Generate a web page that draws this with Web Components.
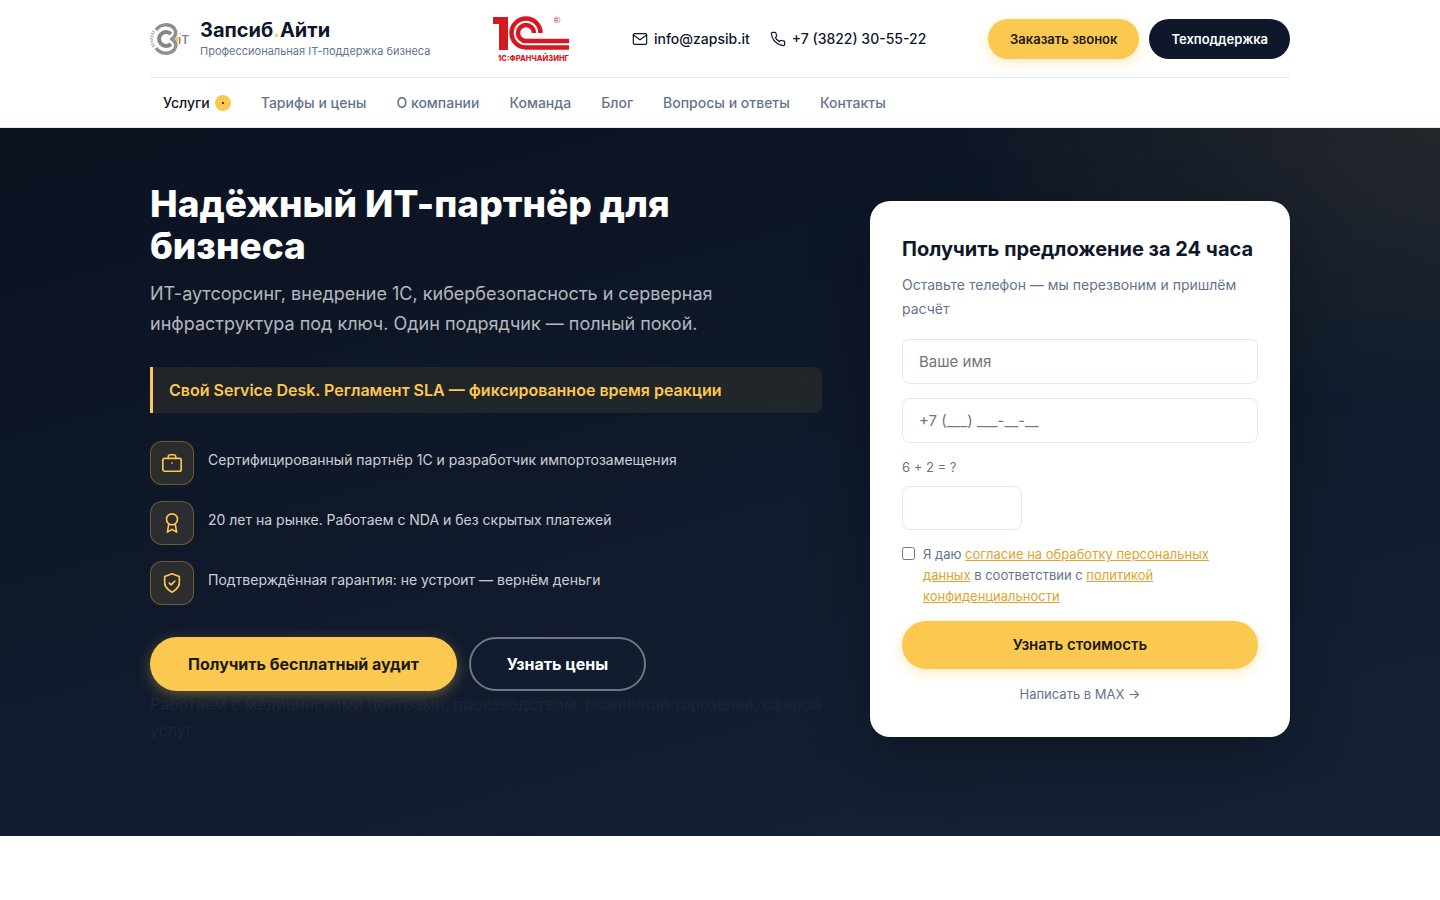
<!DOCTYPE html>
<html lang="ru">
<head>
<meta charset="utf-8">
<meta name="viewport" content="width=device-width, initial-scale=1">
<title>Запсиб.Айти</title>
<style>
  :root {
    --gold: #fbc850;
    --gold-dark: #e0a32e;
    --ink: #0f172a;
    --muted: #64748b;
    --line: #e2e8f0;
  }
  body {
    margin: 0;
    background: #fff;
    color: var(--ink);
    font: 16px/26px Inter, "Liberation Sans", sans-serif;
  }
</style>
</head>
<body>
<site-header></site-header>
<hero-section>
  <span slot="title">Надёжный ИТ-партнёр для бизнеса</span>
  <span slot="lead">ИТ-аутсорсинг, внедрение 1С, кибербезопасность и серверная инфраструктура под ключ. Один подрядчик — полный покой.</span>
  <span slot="note">Свой Service Desk. Регламент SLA — фиксированное время реакции</span>
  <feature-item slot="features" icon="case">Сертифицированный партнёр 1С и разработчик импортозамещения</feature-item>
  <feature-item slot="features" icon="award">20 лет на рынке. Работаем с NDA и без скрытых платежей</feature-item>
  <feature-item slot="features" icon="shield">Подтверждённая гарантия: не устроит — вернём деньги</feature-item>
  <pill-button slot="actions" size="large">Получить бесплатный аудит</pill-button>
  <pill-button slot="actions" size="large" kind="outline">Узнать цены</pill-button>
  <span slot="clients">Работаем с медицинскими центрами, производством, розничной торговлей, сферой услуг</span>
  <offer-form slot="form"></offer-form>
</hero-section>

<script>
const icons = {
  mail: '<rect x="2" y="4" width="20" height="16" rx="2"/><path d="M2 6l10 7 10-7"/>',
  phone: '<path d="M22 16.92v3a2 2 0 0 1-2.18 2 19.79 19.79 0 0 1-8.63-3.07 19.5 19.5 0 0 1-6-6 19.79 19.79 0 0 1-3.07-8.67A2 2 0 0 1 4.11 2h3a2 2 0 0 1 2 1.72c.127.96.361 1.903.7 2.81a2 2 0 0 1-.45 2.11L8.09 9.91a16 16 0 0 0 6 6l1.27-1.27a2 2 0 0 1 2.11-.45c.907.339 1.85.573 2.81.7A2 2 0 0 1 22 16.92z"/>',
  case: '<rect x="2" y="7" width="20" height="14" rx="2"/><path d="M16 7V5a2 2 0 0 0-2-2h-4a2 2 0 0 0-2 2v2M12 12v.2"/>',
  award: '<circle cx="12" cy="8" r="6"/><path d="M8.500 13L7 22l5-3 5 3-1.500-9"/>',
  shield: '<path d="M12 22s8-4 8-10V5l-8-3-8 3v7c0 6 8 10 8 10z"/><path d="M9 12l2 2 4-4"/>'
};

function svgIcon(name, size) {
  return `<svg width="${size}" height="${size}" viewBox="0 0 24 24" fill="none" stroke="currentColor"
    stroke-width="1.8" stroke-linecap="round" stroke-linejoin="round" aria-hidden="true">${icons[name]}</svg>`;
}

function define(name, html) {
  customElements.define(name, class extends HTMLElement {
    constructor() {
      super();
      let tmpl = document.createElement('template');
      tmpl.innerHTML = html;
      this.attachShadow({mode: 'open'}).appendChild(tmpl.content.cloneNode(true));
    }
  });
}

define('pill-button', `
  <style>
    :host { display: inline-block; }
    button {
      box-sizing: border-box;
      width: 100%;
      height: 40px;
      padding: 0 22px;
      border: 0;
      border-radius: 27px;
      background: var(--gold);
      color: #1a1a1a;
      font: 600 13px/20px Inter, "Liberation Sans", sans-serif;
      white-space: nowrap;
      cursor: pointer;
      box-shadow: 0 4px 14px rgba(251, 200, 80, .35);
    }
    :host([kind="dark"]) button { background: var(--ink); color: #fff; box-shadow: none; }
    :host([size="large"]) button { height: 54px; padding: 0 38px; font-size: 16px; font-weight: 700; }
    :host([size="wide"]) { display: block; }
    :host([size="wide"]) button { height: 48px; font-size: 15px; }
    :host([kind="outline"]) button {
      padding: 0 36px;
      border: 2px solid rgba(255, 255, 255, .4);
      background: none;
      color: #fff;
      box-shadow: none;
    }
  </style>
  <button type="button"><slot></slot></button>`);

define('brand-logo', `
  <style>
    :host { display: block; }
    a { display: flex; align-items: center; gap: 10px; color: inherit; text-decoration: none; }
    svg { display: block; flex: none; }
    b { display: block; font-size: 20px; line-height: 24px; font-weight: 700; }
    b i { color: var(--gold); font-style: normal; }
    small { display: block; color: var(--muted); font-size: 11px; line-height: 18px; }
  </style>
  <a href="#">
    <svg width="40" height="40" viewBox="0 0 40 40" fill="none" aria-hidden="true">
      <path d="M4 12A15 15 0 0 0 4 28" stroke="#b5b5b5" stroke-width="3" stroke-dasharray="1.500 1"/>
      <path d="M6 11C10 5 19 4 24 9c3 4 2 8-2 11 4 3 5 7 2 11-5 5-14 4-18-2" stroke="#8f8f8f" stroke-width="3.500"/>
      <path d="M21 15a7 7 0 1 0 0 10" stroke="#858585" stroke-width="4"/>
      <path d="M28 17v6l-4-3z" fill="#fbc850"/>
      <circle cx="30" cy="15" r="1" fill="#fbc850"/>
      <text x="28" y="25" fill="#858585" font-family="Inter, sans-serif" font-size="12" font-weight="600">ıT</text>
    </svg>
    <span><b>Запсиб<i>.</i>Айти</b><small>Профессиональная IT-поддержка бизнеса</small></span>
  </a>`);

define('partner-logo', `
  <style>
    :host { display: block; }
    svg { display: block; }
  </style>
  <svg width="78" height="48" viewBox="0 0 78 48" fill="none" role="img" aria-label="1С:Франчайзинг">
    <path d="M1 2h15v33H7V9H1z" fill="#d61920"/>
    <g stroke="#d61920" stroke-width="4.500">
      <path d="M48.500 18A14.500 14.500 0 1 0 34 32.500H77"/>
      <path d="M42 18A8 8 0 1 0 34 26H77"/>
    </g>
    <circle cx="65" cy="5" r="3" stroke="#e2686c" stroke-width=".6"/>
    <text x="63" y="7" fill="#d61920" font-family="Inter, sans-serif" font-size="5">R</text>
    <text x="6" y="46" fill="#d61920" font-family="Inter, sans-serif" font-size="7.500" font-weight="800">1С:ФРАНЧАЙЗИНГ</text>
  </svg>`);

define('contact-link', `
  <style>
    :host { display: block; font-size: 14px; line-height: 22px; font-weight: 500; }
    a { display: flex; align-items: center; gap: 6px; color: inherit; text-decoration: none; white-space: nowrap; }
    svg { display: block; }
  </style>
  <a href="#"><span id="icon"></span><slot></slot></a>`);

define('nav-link', `
  <style>
    :host { display: block; }
    a {
      display: flex;
      align-items: center;
      gap: 5px;
      padding: 0 13px;
      color: var(--muted);
      font-size: 14px;
      line-height: 24px;
      font-weight: 500;
      text-decoration: none;
      white-space: nowrap;
    }
    i { display: none; place-items: center; width: 16px; height: 16px; border-radius: 50%; background: var(--gold); }
    i::before { content: ""; width: 2px; height: 2px; border-radius: 1px; background: var(--ink); }
    :host([active]) a { color: var(--ink); }
    :host([active]) i { display: grid; }
  </style>
  <a href="#"><slot></slot><i></i></a>`);

define('site-header', `
  <style>
    :host { display: block; background: #fff; border-bottom: 1px solid var(--line); }
    header { max-width: 1140px; margin: 0 auto; padding: 0 24px; }
    .top {
      display: flex;
      align-items: center;
      justify-content: space-between;
      height: 77px;
      border-bottom: 1px solid var(--line);
    }
    .contacts { display: flex; gap: 20px; }
    .buttons { display: flex; gap: 10px; }
    nav { display: flex; align-items: center; gap: 4px; height: 49px; }
  </style>
  <header>
    <div class="top">
      <brand-logo></brand-logo>
      <partner-logo></partner-logo>
      <div class="contacts">
        <contact-link icon="mail">info@zapsib.it</contact-link>
        <contact-link icon="phone">+7 (3822) 30-55-22</contact-link>
      </div>
      <div class="buttons">
        <pill-button>Заказать звонок</pill-button>
        <pill-button kind="dark">Техподдержка</pill-button>
      </div>
    </div>
    <nav>
      <nav-link active>Услуги</nav-link>
      <nav-link>Тарифы и цены</nav-link>
      <nav-link>О компании</nav-link>
      <nav-link>Команда</nav-link>
      <nav-link>Блог</nav-link>
      <nav-link>Вопросы и ответы</nav-link>
      <nav-link>Контакты</nav-link>
    </nav>
  </header>`);

define('feature-item', `
  <style>
    :host { display: flex; gap: 14px; color: rgba(255, 255, 255, .8); font-size: 14px; line-height: 22px; }
    #icon {
      display: grid;
      place-items: center;
      flex: none;
      box-sizing: border-box;
      width: 44px;
      height: 44px;
      border: 1px solid rgba(251, 200, 80, .3);
      border-radius: 12px;
      background: rgba(251, 200, 80, .12);
      color: var(--gold);
    }
    svg { display: block; }
    .text { padding-top: 8px; }
  </style>
  <span id="icon"></span>
  <span class="text"><slot></slot></span>`);

// icon names are given as attributes of the host
document.querySelectorAll('feature-item').forEach(item => {
  item.shadowRoot.querySelector('#icon').innerHTML = svgIcon(item.getAttribute('icon'), 22);
});
document.querySelector('site-header').shadowRoot.querySelectorAll('contact-link').forEach(item => {
  item.shadowRoot.querySelector('#icon').innerHTML = svgIcon(item.getAttribute('icon'), 16);
});

define('offer-form', `
  <style>
    :host {
      display: block;
      padding: 32px;
      border-radius: 20px;
      background: #fff;
      box-shadow: 0 20px 60px rgba(0, 0, 0, .3);
    }
    h2 { margin: 0 0 8px; font-size: 20px; line-height: 32px; font-weight: 700; }
    p { margin: 0 0 18px; color: var(--muted); font-size: 14px; line-height: 24px; }
    form { display: flex; flex-direction: column; gap: 14px; }
    input:not([type="checkbox"]) {
      display: block;
      box-sizing: border-box;
      width: 100%;
      height: 45px;
      padding: 0 16px;
      border: 1px solid var(--line);
      border-radius: 8px;
      background: #fff;
      font: 15px/24px Inter, "Liberation Sans", sans-serif;
    }
    .captcha label { display: block; margin-bottom: 8px; color: var(--muted); font-size: 13px; line-height: 21px; }
    .captcha input:not([type="checkbox"]) { width: 120px; height: 44px; }
    .consent { display: flex; align-items: flex-start; gap: 8px; color: var(--muted); font-size: 13px; line-height: 21px; }
    .consent input { flex: none; width: 13px; height: 13px; margin: 3px 0 0; }
    .consent a { color: var(--gold-dark); }
    .max { color: var(--muted); font-size: 13px; line-height: 22px; text-align: center; text-decoration: none; }
  </style>
  <h2>Получить предложение за 24 часа</h2>
  <p>Оставьте телефон — мы перезвоним и пришлём расчёт</p>
  <form>
    <input type="text" placeholder="Ваше имя" aria-label="Ваше имя">
    <input type="tel" placeholder="+7 (___) ___-__-__" aria-label="Телефон">
    <div class="captcha">
      <label for="sum">6 + 2 = ?</label>
      <input id="sum" type="text">
    </div>
    <div class="consent">
      <input id="agree" type="checkbox">
      <label for="agree">Я даю <a href="#">согласие на обработку персональных данных</a> в соответствии с <a href="#">политикой конфиденциальности</a></label>
    </div>
    <pill-button size="wide">Узнать стоимость</pill-button>
    <a class="max" href="#">Написать в MAX →</a>
  </form>`);

define('hero-section', `
  <style>
    :host {
      display: block;
      padding: 55px 24px 81px;
      background:
        radial-gradient(ellipse 700px 400px at 100% 0, rgba(251, 200, 80, .09), transparent 70%),
        linear-gradient(165deg, #0b1220 0%, #0f1829 40%, #152236 100%);
    }
    .grid {
      display: grid;
      grid-template-columns: minmax(0, 1fr) 420px;
      gap: 48px;
      align-items: center;
      max-width: 1140px;
      margin: 0 auto;
    }
    h1 { margin: 0 0 12px; color: #fff; font-size: 37px; line-height: 42px; font-weight: 800; }
    .lead { margin: 0 0 28px; color: rgba(255, 255, 255, .7); font-size: 18px; line-height: 30px; }
    .note {
      margin: 0 0 28px;
      padding: 10px 16px;
      border-left: 3px solid var(--gold);
      border-radius: 0 8px 8px 0;
      background: rgba(251, 200, 80, .08);
      color: var(--gold);
      font-weight: 600;
    }
    .features { display: grid; gap: 16px; margin-bottom: 32px; }
    /* the glow of the buttons falls over the line under them */
    .actions { display: flex; gap: 12px; position: relative; z-index: 1; }
    .clients { margin: 0 0 12px; color: #1a2538; }
  </style>
  <section class="grid">
    <div>
      <h1><slot name="title"></slot></h1>
      <p class="lead"><slot name="lead"></slot></p>
      <p class="note"><slot name="note"></slot></p>
      <div class="features"><slot name="features"></slot></div>
      <div class="actions"><slot name="actions"></slot></div>
      <p class="clients"><slot name="clients"></slot></p>
    </div>
    <slot name="form"></slot>
  </section>`);
</script>
</body>
</html>
